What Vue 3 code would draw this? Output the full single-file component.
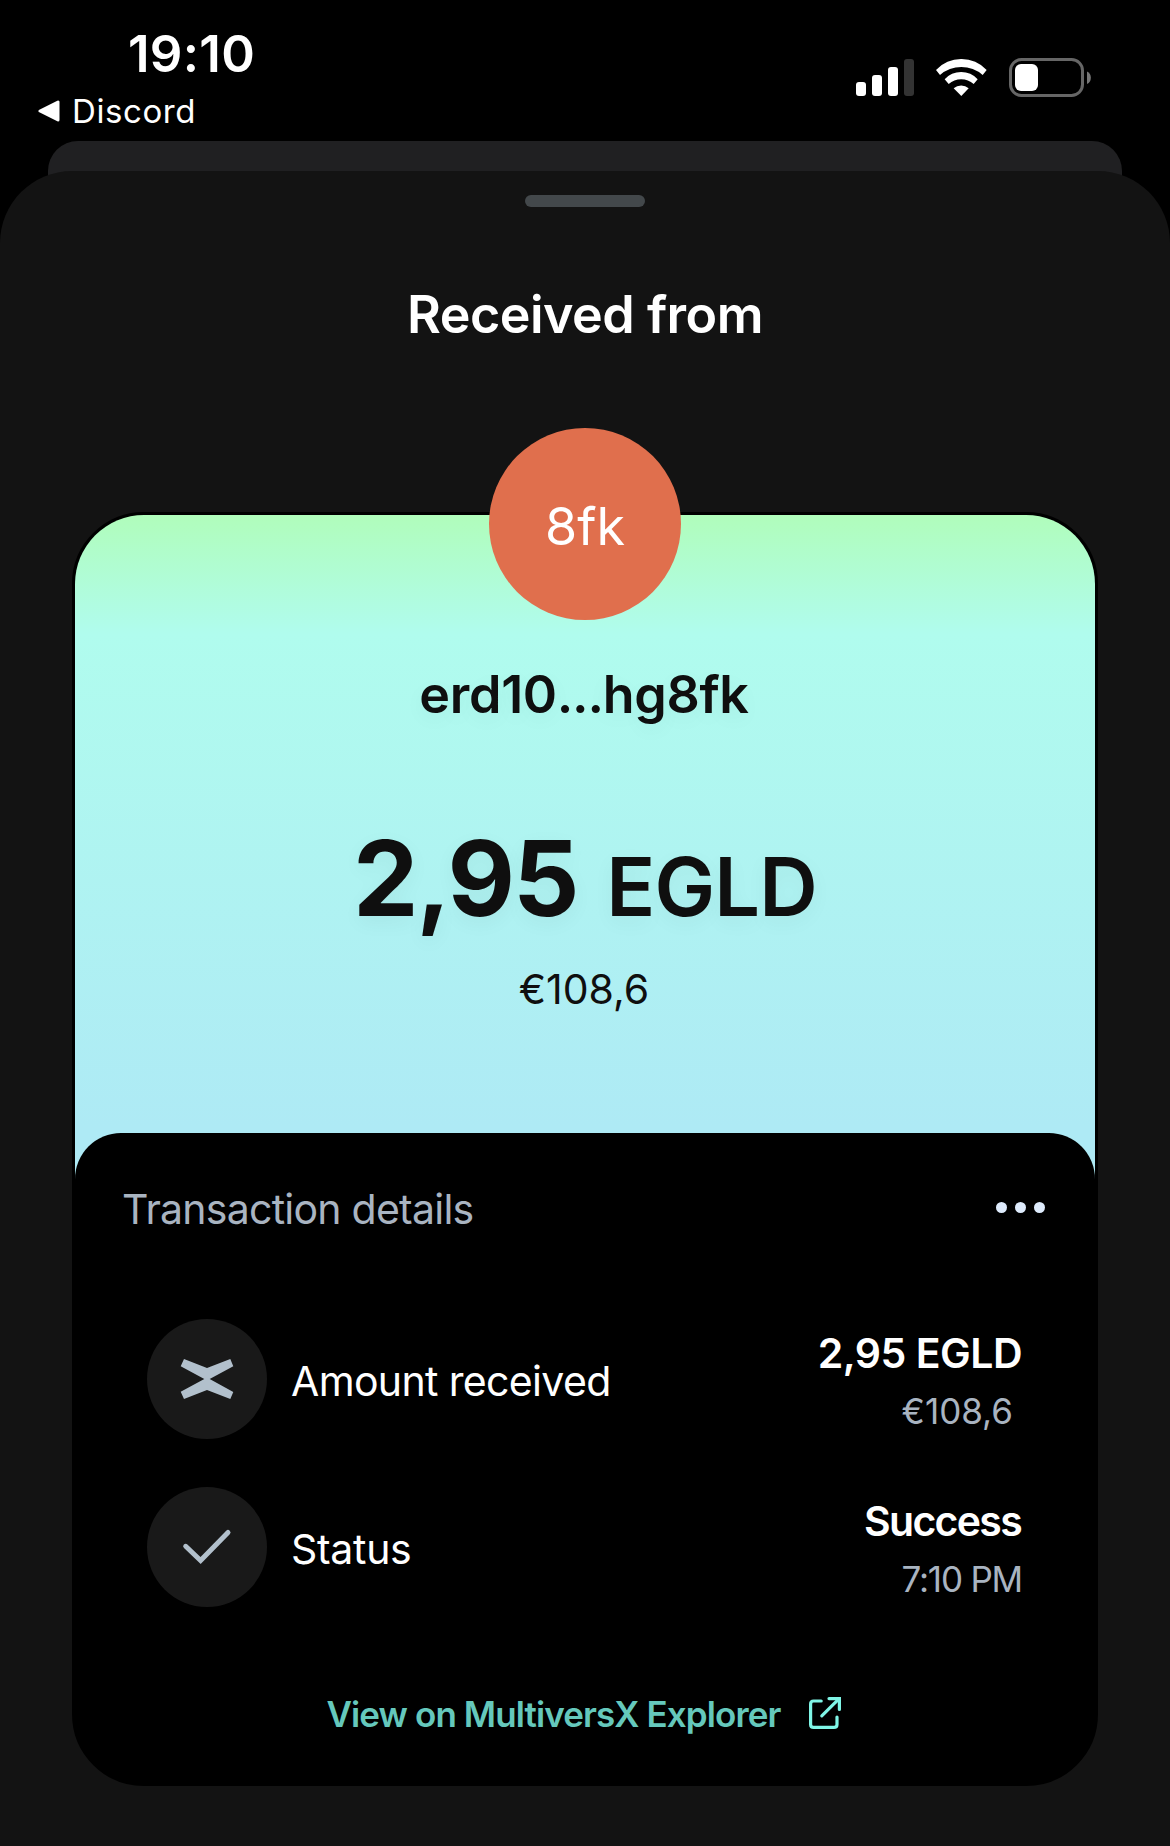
<template>
  <div class="screen">
    <!-- Status bar -->
    <header class="status-bar">
      <div class="status-left">
        <div class="clock">19:10</div>
        <div class="back-app">
          <svg class="back-arrow" viewBox="0 0 22 22">
            <path d="M2 11 L20 2 V20 Z" fill="#fff" stroke="#fff" stroke-width="3" stroke-linejoin="round" />
          </svg>
          <span class="back-name">Discord</span>
        </div>
      </div>
      <div class="status-right">
        <svg width="58" height="37" viewBox="0 0 58 37">
          <rect x="0" y="23" width="10" height="14" rx="3" fill="#fff" />
          <rect x="16" y="16" width="10" height="21" rx="3" fill="#fff" />
          <rect x="32" y="8" width="10" height="29" rx="3" fill="#fff" />
          <rect x="48" y="0" width="10" height="37" rx="3" fill="#333" />
        </svg>
        <svg width="51" height="37" viewBox="409 117 153 111" fill="#fff">
          <path d="M409 150 A104 104 0 0 1 561 150 L549 165 A97 97 0 0 0 421 165 Z" />
          <path d="M435 178 A66 66 0 0 1 534 178 L522 192 A57 57 0 0 0 447 192 Z" />
          <path d="M462 205 A33 33 0 0 1 507 205 L485 228 Z" />
        </svg>
        <svg width="82" height="39" viewBox="0 0 82 39">
          <rect x="1.5" y="1.5" width="72" height="36" rx="11" fill="none" stroke="#666" stroke-width="3" />
          <rect x="6" y="6" width="23" height="27" rx="6" fill="#fff" />
          <path d="M78 13.5 A7 7 0 0 1 78 26 Z" fill="#777" />
        </svg>
      </div>
    </header>

    <div class="back-sheet"></div>

    <main class="sheet">
      <div class="handle"></div>
      <h1 class="title">Received from</h1>

      <section class="card">
        <div class="summary">
          <div class="avatar"><span>8fk</span></div>
          <div class="address">erd10<span class="dots">...</span>hg8fk</div>
          <div class="amount">
            <span class="amount-value">2,95</span>
            <span class="amount-token">EGLD</span>
          </div>
          <div class="fiat">€108,6</div>
        </div>

        <div class="details">
          <div class="details-head">
            <h2 class="details-title">Transaction details</h2>
            <div class="more"><i></i><i></i><i></i></div>
          </div>

          <ul class="rows">
            <li v-for="row in rows" :key="row.label" class="row" :class="row.icon">
              <svg class="row-icon" viewBox="0 0 120 120">
                <circle cx="60" cy="60" r="60" fill="#191919" />
                <path
                  v-if="row.icon === 'token'"
                  d="M33.7 47.3 L37 40 L60 49 L83.3 40 L86.3 47.3 L62.7 60 L86.3 73 L83.3 80 L60 71 L37 80 L33.7 72.7 L57.3 60 Z"
                  fill="#b2c0cc"
                />
                <path
                  v-else
                  d="M38.7 59.3 L53.6 73.5 L81 45.5"
                  fill="none"
                  stroke="#b2c0cc"
                  stroke-width="5"
                  stroke-linecap="round"
                />
              </svg>
              <span class="row-label">{{ row.label }}</span>
              <div class="row-values">
                <span class="row-value">{{ row.value }}</span>
                <span class="row-sub">{{ row.sub }}</span>
              </div>
            </li>
          </ul>

          <a class="explorer" href="#">
            <span class="explorer-text">View on MultiversX Explorer</span>
            <svg width="32" height="32" viewBox="0 0 32 32" fill="none" stroke="#7ff5e6" stroke-width="3.2" stroke-linecap="round">
              <path d="M12.2 4 H4.6 Q1.6 4 1.6 6.9 V27.5 Q1.6 30.4 4.6 30.4 H24.9 Q28 30.4 28 27.5 V20" />
              <path d="M12.8 18.8 L29.4 2.4" />
              <path d="M20 1.6 H30.4 V12.4" />
            </svg>
          </a>
        </div>
      </section>
    </main>
  </div>
</template>

<script setup>
import { ref } from "vue";

const rows = ref([
  { icon: "token", label: "Amount received", value: "2,95 EGLD", sub: "€108,6" },
  { icon: "check", label: "Status", value: "Success", sub: "7:10 PM" },
]);
</script>

<style>
body {
  margin: 0;
  background: #000;
}
</style>

<style scoped>
.screen {
  display: flex;
  flex-direction: column;
  width: 1170px;
  height: 1846px;
  overflow: hidden;
  background: #000;
  color: #fff;
  font-family: Inter, "Liberation Sans", sans-serif;
  white-space: nowrap;
}

/* Status bar */
.status-bar {
  display: flex;
  justify-content: space-between;
  flex: none;
  height: 141px;
  box-sizing: border-box;
  padding: 24px 79px 0 38px;
}

.clock {
  margin-left: 90px;
  font-size: 51px;
  font-weight: 600;
  letter-spacing: 0.3px;
  line-height: 60px;
}

.back-app {
  display: flex;
  align-items: center;
  gap: 12px;
  margin-top: 7px;
  height: 40px;
}

.back-arrow {
  width: 22px;
  height: 22px;
}

.back-name {
  font-size: 33px;
  letter-spacing: 0.6px;
  line-height: 40px;
}

.status-right {
  display: flex;
  align-items: center;
  gap: 22px;
  height: 107px;
}

/* Sheets */
.back-sheet {
  flex: none;
  height: 60px;
  margin: 0 48px;
  border-radius: 30px 30px 0 0;
  background: #202022;
}

.sheet {
  flex: 1;
  margin-top: -30px;
  padding: 24px 72px 0;
  border-radius: 72px 72px 0 0;
  background: #131313;
}

.handle {
  width: 120px;
  height: 12px;
  margin: 0 auto;
  border-radius: 6px;
  background: #43484b;
}

.title {
  margin: 78px 0 167px;
  font-size: 52px;
  font-weight: 600;
  letter-spacing: -0.5px;
  line-height: 60px;
  text-align: center;
}

/* Card */
.card {
  border: 3px solid #000;
  border-radius: 72px;
  background: #000;
}

.summary {
  display: flex;
  flex-direction: column;
  align-items: center;
  padding-bottom: 166px;
  border-radius: 69px 69px 0 0;
  background: linear-gradient(#b0fdbb, #b0fcee 18%, #aeeaf5 92%);
  color: #0f0f0f;
}

.avatar {
  display: flex;
  align-items: center;
  justify-content: center;
  width: 192px;
  height: 192px;
  margin-top: -87px;
  border-radius: 50%;
  background: #e06f4d;
  color: #fff;
  font-size: 52px;
}

.avatar span {
  padding-top: 4px;
}

.address {
  margin: 45px 2px 0 0;
  font-size: 52px;
  font-weight: 600;
  letter-spacing: -0.3px;
  line-height: 60px;
  text-shadow: 0 6px 20px rgba(0, 0, 0, 0.05);
}

.address .dots {
  letter-spacing: -1.3px;
}

.amount {
  display: flex;
  align-items: baseline;
  gap: 29px;
  height: 120px;
  margin-top: 93px;
  font-weight: 600;
  text-shadow: 0 6px 20px rgba(0, 0, 0, 0.05);
}

.amount-value {
  font-size: 104px;
  font-weight: 700;
  letter-spacing: -2.2px;
  line-height: 120px;
}

.amount-token {
  font-size: 81px;
  letter-spacing: -0.8px;
  line-height: 1;
}

.fiat {
  margin: 26px 2px 0 0;
  font-size: 41px;
  line-height: 50px;
}

/* Details panel */
.details {
  margin-top: -47px;
  padding: 50px 50px 44px 47px;
  border-radius: 46px 46px 69px 69px;
  background: #000;
}

.details-head {
  display: flex;
  align-items: center;
  justify-content: space-between;
}

.details-title {
  margin: 1px 0 -1px;
  color: #a9b4c1;
  font-size: 41px;
  font-weight: 400;
  letter-spacing: -0.75px;
  line-height: 50px;
}

.more {
  display: flex;
  gap: 8px;
  margin-bottom: 1px;
}

.more i {
  width: 11px;
  height: 11px;
  border-radius: 50%;
  background: #deebfc;
}

.rows {
  display: flex;
  flex-direction: column;
  gap: 48px;
  margin: 86px 23px 82px 25px;
  padding: 0;
  list-style: none;
}

.row {
  display: flex;
  align-items: center;
  height: 120px;
}

.row-icon {
  width: 120px;
  height: 120px;
}

.row-label {
  margin-left: 24px;
  padding-top: 3px;
  font-size: 41px;
  letter-spacing: -0.3px;
}

.row-values {
  display: flex;
  flex-direction: column;
  align-items: flex-end;
  margin-left: auto;
  padding-top: 5px;
  line-height: 58px;
}

.row-value {
  font-size: 41px;
  font-weight: 600;
  letter-spacing: -0.5px;
}

.row-sub {
  color: #a9b4c1;
  font-size: 35px;
}

.token .row-label {
  letter-spacing: -0.65px;
}

.token .row-sub {
  margin-right: 9px;
}

.check .row-value {
  margin-right: 1px;
  letter-spacing: -1.7px;
}

.check .row-sub {
  letter-spacing: -1.2px;
}

.explorer {
  display: flex;
  align-items: center;
  justify-content: center;
  gap: 29px;
  height: 50px;
  margin-left: 1px;
  color: #65c8bc;
  font-size: 35px;
  font-weight: 600;
  letter-spacing: -0.9px;
  text-decoration: none;
}

.explorer svg {
  margin-bottom: 2px;
}
</style>
